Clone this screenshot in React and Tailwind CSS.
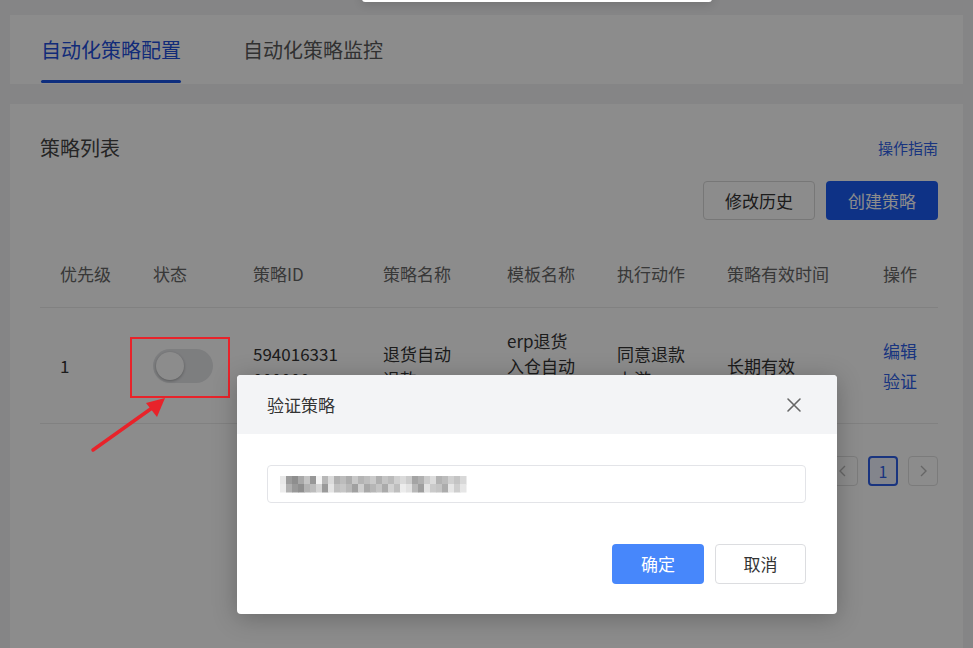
import React from "react";

const FONT = { fontFamily: '"Noto Sans CJK SC", "Noto Sans", sans-serif' };

function Mosaic() {
  const cells = [
    [0, 0, "#e8e8e8"], [0, 1, "#ededed"],
    [6, 0, "#9c9c9c"], [6, 1, "#b0b0b0"],
    [12, 0, "#8e8e8e"], [12, 1, "#999999"],
    [18, 0, "#a8a8a8"], [18, 1, "#8f8f8f"],
    [24, 0, "#c4c4c4"], [24, 1, "#b2b2b2"],
    [30, 0, "#979797"], [30, 1, "#bcbcbc"],
    [36, 0, "#f4f4f4"], [36, 1, "#d4d4d4"],
    [42, 0, "#b8b8b8"], [42, 1, "#9a9a9a"],
    [48, 0, "#dadada"], [48, 1, "#e4e4e4"],
    [54, 0, "#b0b0b0"], [54, 1, "#c0c0c0"],
    [60, 0, "#bcbcbc"], [60, 1, "#c6c6c6"],
    [66, 0, "#acacac"], [66, 1, "#b8b8b8"],
    [72, 0, "#c8c8c8"], [72, 1, "#a0a0a0"],
    [78, 0, "#b4b4b4"], [78, 1, "#cecece"],
    [84, 0, "#bebebe"], [84, 1, "#a8a8a8"],
    [90, 0, "#cacaca"], [90, 1, "#b6b6b6"],
    [96, 0, "#afafaf"], [96, 1, "#c4c4c4"],
    [102, 0, "#c4c4c4"], [102, 1, "#aaaaaa"],
    [108, 0, "#bababa"], [108, 1, "#d2d2d2"],
    [114, 0, "#d0d0d0"], [114, 1, "#bebebe"],
    [120, 0, "#dadada"], [120, 1, "#ececec"],
    [126, 0, "#cccccc"], [126, 1, "#e2e2e2"],
    [132, 0, "#a4a4a4"], [132, 1, "#b8b8b8"],
    [138, 0, "#b0b0b0"], [138, 1, "#9e9e9e"],
    [144, 0, "#cccccc"], [144, 1, "#e2e2e2"],
    [150, 0, "#dcdcdc"], [150, 1, "#cacaca"],
    [156, 0, "#b2b2b2"], [156, 1, "#c4c4c4"],
    [162, 0, "#bcbcbc"], [162, 1, "#acacac"],
    [168, 0, "#d0d0d0"], [168, 1, "#e6e6e6"],
    [174, 0, "#c4c4c4"], [174, 1, "#cecece"],
    [180, 0, "#d8d8d8"], [180, 1, "#e6e6e6"],
  ];
  return (
    <svg width="188" height="18" viewBox="0 0 188 18">
      {cells.map(([x, r, c], i) => (
        <rect key={i} x={x} y={r * 8 + 1} width="6.5" height="8.5" fill={c} />
      ))}
    </svg>
  );
}

export default function App() {
  const cols = "grid grid-cols-[93px_100px_130px_124px_110px_110px_156px_75px]";
  return (
    <div
      className="relative w-[973px] h-[648px] overflow-hidden bg-[#f2f3f5] text-[#333]"
      style={FONT}
    >
      <div className="px-[10px] pt-[15px]">
        {/* Tabs card */}
        <div className="bg-white flex gap-[62px] px-[31px] pb-[1px]">
          <div className="flex flex-col">
            <div className="pt-[23px] text-[20px] leading-[24px] text-[#1f4fdc]">自动化策略配置</div>
            <div className="mt-[18px] h-[3px] bg-[#1a54e6] rounded-full" />
          </div>
          <div className="flex flex-col">
            <div className="pt-[23px] text-[20px] leading-[24px] text-[#5a5a5a]">自动化策略监控</div>
          </div>
        </div>

        {/* List card */}
        <div className="mt-[20px] bg-white h-[560px] pl-[30px] pr-[25px]">
          <div className="pt-[30px] flex items-center justify-between">
            <div className="text-[20px] leading-[28px] text-[#444]">策略列表</div>
            <div className="text-[15px] leading-[20px] text-[#2e5fe8]">操作指南</div>
          </div>
          <div className="mt-[19px] flex justify-end gap-[11px]">
            <div className="w-[112px] h-[39px] rounded-[4px] border border-[#d9d9d9] flex items-center justify-center text-[17px] text-[#333] bg-white">
              修改历史
            </div>
            <div className="w-[112px] h-[39px] rounded-[4px] bg-[#1a5cf5] flex items-center justify-center text-[17px] text-white">
              创建策略
            </div>
          </div>

          {/* Table */}
          <div className="mt-[20px] text-[17px]">
            <div className={`${cols} h-[68px] items-center border-b border-[#ececec] text-[#666]`}>
              <div className="pl-[20px]">优先级</div>
              <div className="pl-[20px]">状态</div>
              <div className="pl-[20px]">策略ID</div>
              <div className="pl-[20px]">策略名称</div>
              <div className="pl-[20px]">模板名称</div>
              <div className="pl-[20px]">执行动作</div>
              <div className="pl-[20px]">策略有效时间</div>
              <div className="pl-[20px]">操作</div>
            </div>
            <div className={`${cols} h-[116px] items-center border-b border-[#ececec] leading-[25px] text-[#333]`}>
              <div className="pl-[20px]">1</div>
              <div className="pl-[20px]">
                <div className="w-[60px] h-[34px] rounded-full bg-[#e4e5e8] p-[3px] flex">
                  <div className="w-[28px] h-[28px] rounded-full bg-white shadow-[0_1px_3px_rgba(0,0,0,0.3)]" />
                </div>
              </div>
              <div className="pl-[20px]">594016331<br />000000</div>
              <div className="pl-[20px]">退货自动<br />退款</div>
              <div className="pl-[20px]">erp退货<br />入仓自动<br />退款</div>
              <div className="pl-[20px]">同意退款<br />上游</div>
              <div className="pl-[20px]">长期有效</div>
              <div className="pl-[20px] flex flex-col gap-[5px] text-[#2e5fe8]">
                <span>编辑</span>
                <span>验证</span>
              </div>
            </div>
          </div>

          {/* Pagination */}
          <div className="mt-[32px] flex justify-end gap-[10px]">
            <div className="w-[30px] h-[30px] rounded-[4px] border border-[#e0e0e0] flex items-center justify-center text-[#bbb]">
              <svg width="10" height="14" viewBox="0 0 10 14" fill="none" stroke="currentColor" strokeWidth="1.4"><path d="M7 2 L2 7 L7 12" /></svg>
            </div>
            <div className="w-[30px] h-[30px] rounded-[4px] border-2 border-[#2e5fe8] bg-[#eef3ff] flex items-center justify-center text-[16px] text-[#2e5fe8]">
              1
            </div>
            <div className="w-[30px] h-[30px] rounded-[4px] border border-[#e0e0e0] flex items-center justify-center text-[#bbb]">
              <svg width="10" height="14" viewBox="0 0 10 14" fill="none" stroke="currentColor" strokeWidth="1.4"><path d="M3 2 L8 7 L3 12" /></svg>
            </div>
          </div>
        </div>
      </div>

      {/* Mask */}
      <div className="absolute inset-0 bg-black/[0.45]" />

      {/* Top edge of a white layer */}
      <div className="absolute left-[362px] top-[-10px] w-[350px] h-[12px] bg-white rounded-b-[3px] shadow-[0_2px_10px_rgba(0,0,0,0.15)]" />

      {/* Annotation */}
      <svg className="absolute left-0 top-0" width="973" height="648" viewBox="0 0 973 648">
        <rect x="131" y="338" width="98" height="59" fill="none" stroke="#e8232a" strokeWidth="2" />
        <line x1="93" y1="450" x2="152" y2="408" stroke="#e8232a" strokeWidth="3.5" strokeLinecap="round" />
        <polygon points="165,398 146,403 157,417" fill="#e8232a" />
      </svg>

      {/* Dialog */}
      <div className="absolute left-[237px] top-[375px] w-[600px] h-[239px] bg-white rounded-[4px] shadow-[0_4px_24px_rgba(0,0,0,0.25)] overflow-hidden flex flex-col">
        <div className="h-[59px] bg-[#f3f4f6] flex items-center justify-between pl-[30px] pr-[35px]">
          <span className="text-[17px] text-[#333]">验证策略</span>
          <svg width="16" height="16" viewBox="0 0 16 16" stroke="#666" strokeWidth="1.6" strokeLinecap="round">
            <path d="M2 2 L14 14 M14 2 L2 14" />
          </svg>
        </div>
        <div className="px-[30px] pr-[31px] pt-[31px]">
          <div className="h-[38px] rounded-[4px] border border-[#e3e4e8] flex items-center pl-[12px]">
            <Mosaic />
          </div>
          <div className="mt-[41px] flex justify-end gap-[11px]">
            <div className="w-[92px] h-[40px] rounded-[4px] bg-[#4787fb] text-white text-[17px] flex items-center justify-center">确定</div>
            <div className="w-[91px] h-[40px] rounded-[4px] border border-[#dcdde0] bg-white text-[#333] text-[17px] flex items-center justify-center">取消</div>
          </div>
        </div>
      </div>
    </div>
  );
}
